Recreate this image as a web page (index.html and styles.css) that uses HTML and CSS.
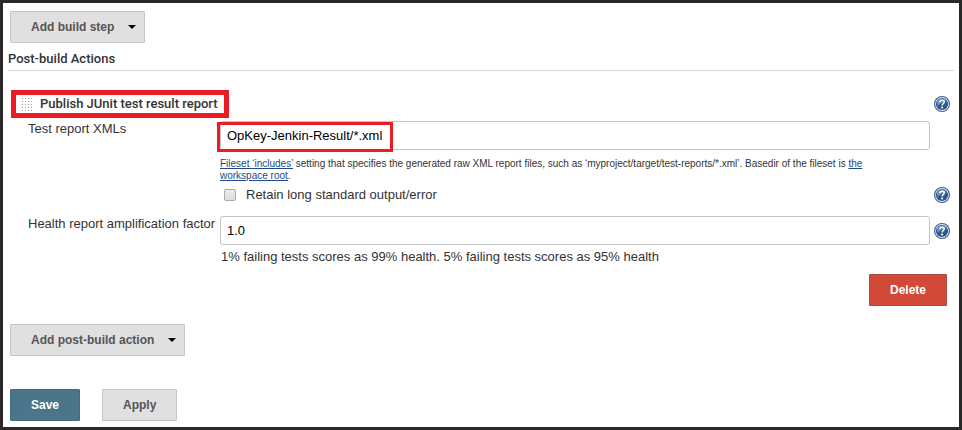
FILE: index.html
```
<!DOCTYPE html>
<html lang="en">
<head>
    <meta charset="UTF-8">
    <title>Job Configuration</title>
    <meta name="viewport" content="width=device-width, initial-scale=1">
    <link rel="stylesheet" href="styles.css">
</head>
<body>
<svg width="0" height="0" class="defs" aria-hidden="true">
    <symbol id="help" viewBox="0 0 16 16">
        <circle cx="8" cy="8" r="8" fill="#3b608f"/>
        <circle cx="8" cy="8" r="6.900" fill="#e4ebf4"/>
        <circle cx="8" cy="8" r="6.100" fill="#2f568c"/>
        <path d="M3 5.5A5.6 5.6 0 0 1 13 5.5Q8 5 4 10Q2.500 8 3 5.500Z" fill="#6f8fb8"/>
        <path d="M5.900 6.200Q5.900 4.300 8 4.300Q10.200 4.300 10.200 6Q10.200 7 9.200 7.600Q8.200 8.200 8.200 9.400" fill="none" stroke="#fff" stroke-width="1.500"/>
        <circle cx="8.100" cy="11.500" r="1" fill="#fff"/>
    </symbol>
</svg>
<form id="config-form">
    <div class="bar">
        <button type="button" class="btn menu">Add build step <span class="caret"></span></button>
    </div>
    <h2>Post-build Actions</h2>

    <section class="step">
        <div class="step-head">
            <h3><span class="grip"></span>Publish JUnit test result report</h3>
            <a href="#" class="help" aria-label="Help for this action"><svg><use href="#help"/></svg></a>
        </div>
        <div class="row">
            <label for="xmls">Test report XMLs</label>
            <div class="field">
                <input type="text" id="xmls" value="OpKey-Jenkin-Result/*.xml">
                <span class="mark"></span>
                <p class="hint"><a href="#">Fileset ‘includes’</a> setting that specifies the generated raw XML report files, such as ‘myproject/target/test-reports/*.xml’. Basedir of the fileset is <a href="#">the workspace root</a>.</p>
            </div>
        </div>
        <div class="row check-row">
            <div class="field check">
                <input type="checkbox" id="retain">
                <label for="retain">Retain long standard output/error</label>
            </div>
            <a href="#" class="help" aria-label="Help for long output"><svg><use href="#help"/></svg></a>
        </div>
        <div class="row">
            <label for="factor">Health report amplification factor</label>
            <div class="field">
                <input type="text" id="factor" value="1.0">
                <p class="note">1% failing tests scores as 99% health. 5% failing tests scores as 95% health</p>
            </div>
            <a href="#" class="help low" aria-label="Help for amplification factor"><svg><use href="#help"/></svg></a>
        </div>
        <div class="step-foot">
            <button type="button" class="btn danger">Delete</button>
        </div>
    </section>

    <div class="bar">
        <button type="button" class="btn menu">Add post-build action <span class="caret"></span></button>
    </div>
    <div class="bar actions">
        <button type="submit" class="btn primary">Save</button>
        <button type="button" class="btn">Apply</button>
    </div>
</form>
</body>
</html>
```

FILE: styles.css
```
* { box-sizing: border-box; }
body { margin: 0; min-height: 100vh; border: 3px solid #2a2829; padding: 8px 5px 6px; background: #fff; color: #333; font: 13px/16px "Liberation Sans", Arial, sans-serif; }
.defs { position: absolute; }
h2, h3, p { margin: 0; }
h2, h3 { font: 500 13px/16px Roboto, sans-serif; }
h2 { margin-top: 8px; padding-bottom: 3px; border-bottom: 1px solid #d8d8d8; }
a { color: #204a87; }

.bar { display: flex; padding-left: 2px; }
.btn { height: 32px; padding: 0 20px; border: 1px solid #c4c4c4; border-radius: 1px; background: #e0e0e0; color: #555; font: bold 12px/16px "Liberation Sans", Arial, sans-serif; cursor: pointer; }
.menu { display: flex; align-items: center; gap: 14px; padding-right: 8px; }
.caret { border: 4px solid transparent; border-top-color: #000; border-bottom: 0; }
.primary { background: #4b758b; border-color: #436b80; color: #fff; }
.danger { background: #d24939; border-color: #a84a40; color: #fff; }

.step { padding: 19px 4px 0 3px; }
.step-head { display: flex; justify-content: space-between; align-items: center; }
h3 { display: flex; align-items: center; gap: 8px; height: 28px; padding: 0 6px 0 5px; border: 5px solid #ed1c24; color: #333; }
.grip { width: 11px; height: 15px; background: radial-gradient(circle, #999 1px, transparent 1px) 0 0 / 3px 3px; }
.help { display: block; width: 16px; height: 16px; }
.help svg { display: block; width: 16px; height: 16px; }
.low { margin-top: 7px; }

.row { display: grid; grid-template-columns: 188px 1fr 16px; column-gap: 4px; padding: 3px 0 0 17px; }
.row > label { margin-right: -4px; white-space: nowrap; }
.field { position: relative; }
.row .field { grid-column: 2; }
input[type="text"] { display: block; width: 100%; height: 29px; padding: 0 6px; border: 1px solid #c4c4c4; border-radius: 3px; background: #fff; color: #000; font: inherit; }
.mark { position: absolute; left: -3px; top: 1px; width: 176px; height: 30px; border: 3px solid #ed1c24; pointer-events: none; }
.hint { padding: 8px 32px 0 0; font-size: 10px; line-height: 12px; }
.check-row { padding-top: 5px; }
.check { display: flex; align-items: center; gap: 10px; padding-left: 4px; }
.check input { appearance: none; width: 12px; height: 12px; margin: 0; border: 1px solid #aaa; border-radius: 2px; background: linear-gradient(#eee, #ddd); }
.check-row + .row { padding-top: 13px; }
.note { padding: 4px 0 0 1px; }
.step-foot { display: flex; justify-content: flex-end; margin: 9px 3px 18px 0; }
.actions { gap: 22px; margin-top: 33px; }
```
